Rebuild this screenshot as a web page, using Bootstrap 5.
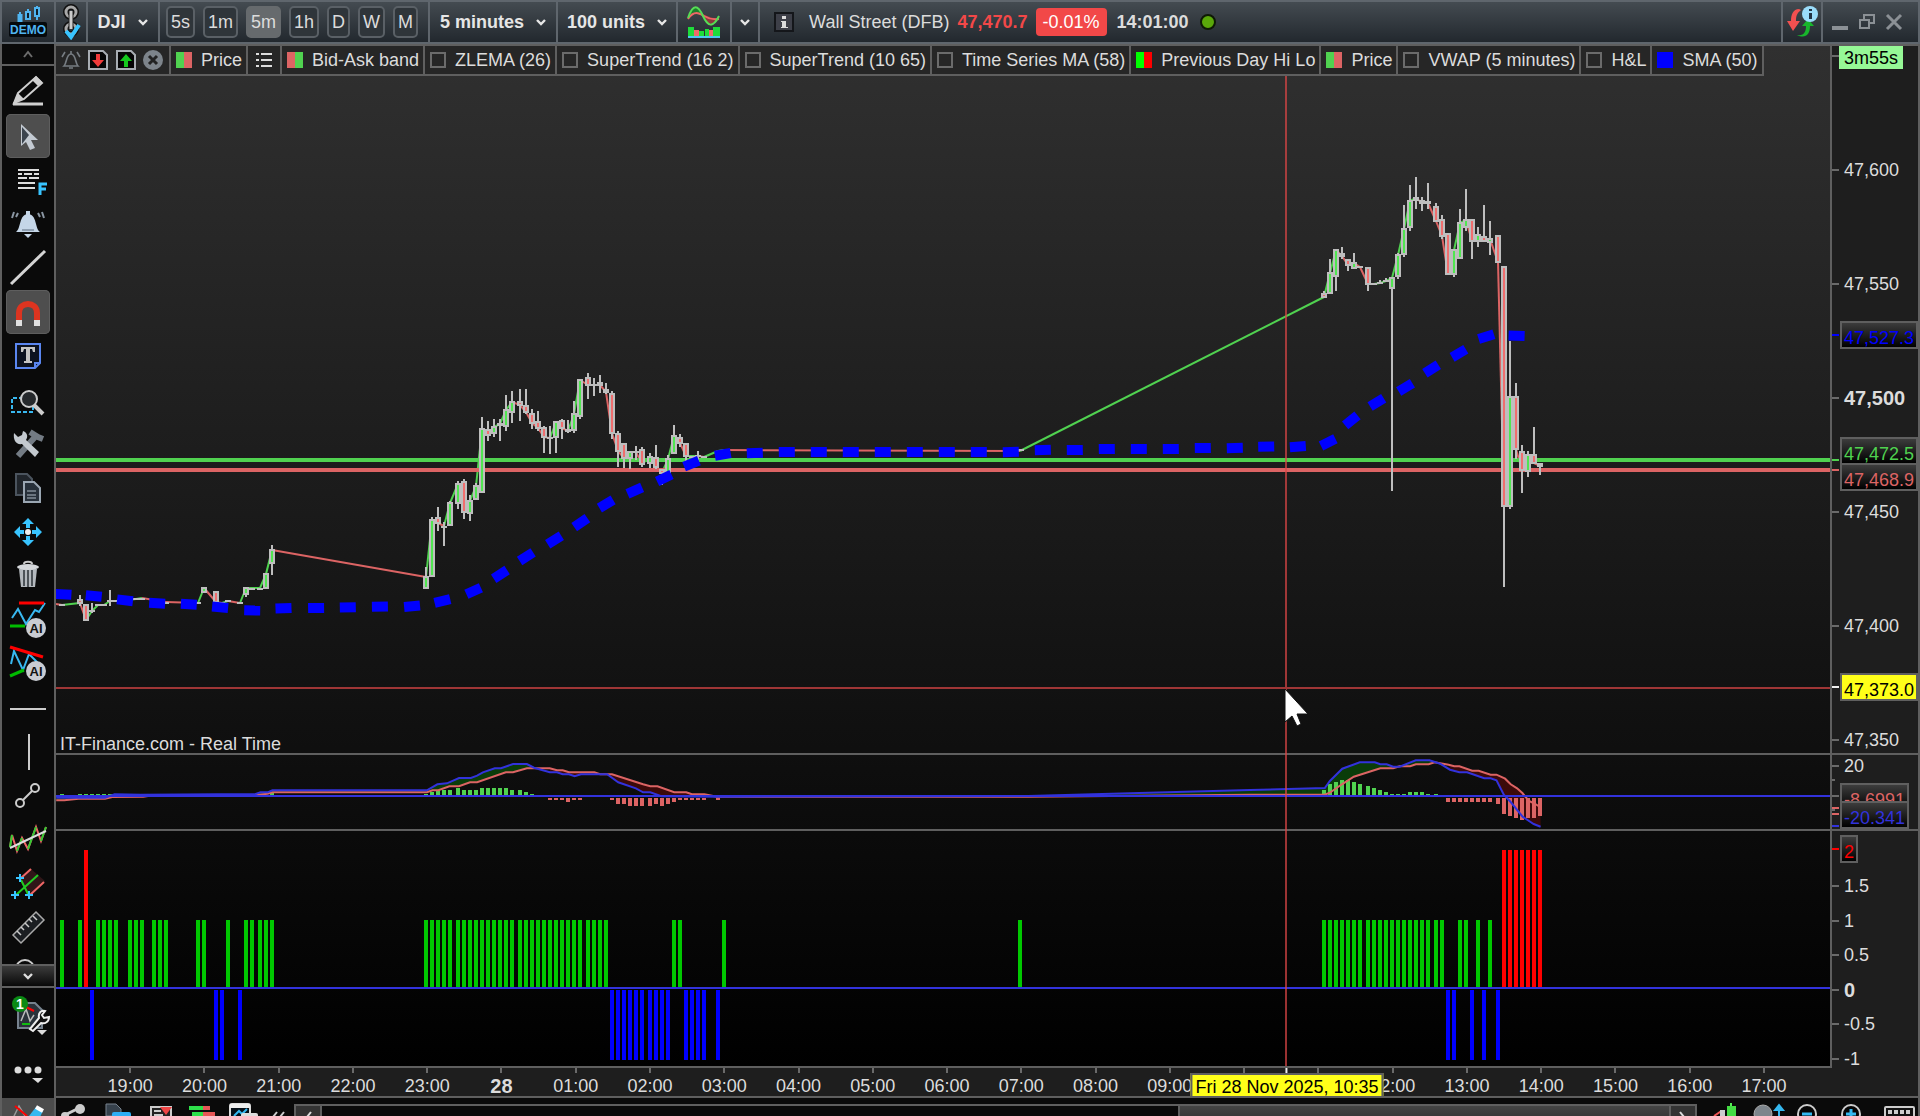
<!DOCTYPE html>
<html lang="en">
<head>
<meta charset="utf-8">
<meta name="viewport" content="width=device-width, initial-scale=1">
<title>DJI - 5 minutes</title>
<link href="https://cdn.jsdelivr.net/npm/bootstrap@5.3.0/dist/css/bootstrap.min.css" rel="stylesheet">
<style>
:root{--line:#5f5f5f;--steel:#5f666d;--txt:#dcdcdc}
body{font:18px/20px "Liberation Sans",Arial,sans-serif;color:var(--txt);background:#0a0a0a;overflow:hidden}
svg{display:block;flex:none}
button{color:inherit;font:inherit;background:none;border:0;padding:0}
.topbar{border:2px solid var(--steel);background:linear-gradient(#444b51,#22282e);height:44px}
.cell{border-right:2px solid var(--steel);display:flex;align-items:center;justify-content:center;flex:none}
.cell-logo,.cell-ind{width:54px}
.cell-link{width:32px}
.cell-market{width:72px}
.cell-frames{padding:0 10px 0 6px;gap:8px}
.cell-frame{padding:0 9px 0 10px}
.cell-units{padding:0 8px 0 9px}
.cell-more{width:28px}
.cell-sync{width:42px;border-left:2px solid var(--steel)}
.pick{appearance:none;border:0;color:#e6e6e6;font:bold 18px/20px "Liberation Sans",Arial,sans-serif;padding:0 22px 0 0;background:url("data:image/svg+xml,%3Csvg xmlns='http://www.w3.org/2000/svg' width='12' height='20'%3E%3Cpath d='M2 8l4 4 4-4' fill='none' stroke='%23e6e6e6' stroke-width='2.4'/%3E%3C/svg%3E") no-repeat right center;outline:0}
.pick option{color:#000}
.tf{border:2px solid #5a6066;border-radius:5px;height:32px;padding:0 3px;background:#2f353a}
.tf.active{background:#666a6d;border-color:#666a6d}
.quote{padding-left:14px;gap:8px}
.quote svg:first-child{margin-right:7px}
.last-price{color:#f24848}
.chg{background:#f24848;color:#fff;border-radius:4px;height:28px;padding:4px 7px}
.clock{padding:0 2px}
.winbtns{padding:0 15px 0 8px;gap:9px}
.winbtns button{width:18px}
.body-row{min-height:0;border:0 solid var(--line);border-width:0 2px}
.chart-col{min-width:0;border-top:2px solid var(--line)}
.side{width:54px;border-right:2px solid var(--line);background:#0a0a0a}
.tools{flex:1 1 0;min-height:0;overflow:hidden;padding-top:4px;border-top:2px solid var(--line)}
.tool{width:44px;height:44px;flex:none;border-radius:5px}
.tool.active{background:#4e4e4e;box-shadow:inset 0 0 0 1px #5e5e5e}
.fold{height:20px;flex:none;width:100%}
.fold.down{background:linear-gradient(#3c3c3c,#080808);border-top:2px solid var(--line);border-bottom:2px solid var(--line);height:24px}
.extra{height:110px;gap:17px;padding-top:1px;flex:none}
.stack{display:grid;grid-template-rows:minmax(0,709fr) minmax(0,76fr) minmax(0,237fr);flex:1 1 0;min-height:0;background:linear-gradient(#303030,#000)}
.pane{display:flex;min-height:0;border-bottom:2px solid var(--line)}
.pane-signal{border-bottom:0}
.pane-signal .plot{border-bottom:2px solid var(--line)}
.plot{flex:1 1 0;min-width:0;position:relative}
.plot svg,.cross svg{width:100%;height:100%}
.axis{width:88px;flex:none;border-left:2px solid var(--line);background:#1e1e1e;position:relative;display:flex;flex-direction:column;justify-content:space-between}
.axis-price{padding:115px 0 4px}
.axis-macd{padding-top:2px}
.axis-signal{padding-top:46px}
.axis .lv{display:flex;align-items:center;gap:5px;line-height:18px;height:18px}
.axis .lv::before{content:"";width:7px;height:2px;background:#6a6a6a}
.axis b,.hours b{font-size:20px}
.axis-ticks{position:absolute;left:0;top:0;width:7px;height:100%}
.vtag{position:absolute;left:8px;transform:translateY(-50%);height:28px;border:2px solid var(--line);background:linear-gradient(#3c3c3c,#000);padding:4px 2px 0;line-height:22px}
.vtag::before{content:"";position:absolute;left:-10px;top:11px;width:7px;height:2px;background:currentColor}
.axis-macd .vtag::before{display:none}
.v-sma{color:#00f}
.v-ask{color:#50d250}
.v-ask::before{top:20px}
.v-bid{color:#dc6464}
.v-bid::before{top:4px}
.v-cursor{color:#000;background:#ffff19}
.v-cursor::before{background:#eee}
.v-macd{color:#3232dc}
.v-signal{color:red}
.left-time{position:absolute;left:7px;top:0;background:#96f896;color:#000;padding:2px 5px;height:23px}
.left-time::before{content:"";position:absolute;left:-7px;top:9px;width:7px;height:2px;background:#6a6a6a}
.legend{position:absolute;left:0;top:0;height:30px;background:#262626;border-bottom:2px solid var(--line);z-index:3}
.lgi{display:flex;align-items:center;gap:9px;padding:0 4px 0 5px;border-right:2px solid var(--line);white-space:nowrap}
.lg-tools{gap:6px;padding-right:6px}
.lg-list{padding:0 8px 0 7px}
.lgi input{appearance:none;width:16px;height:16px;margin:0;border:2px solid #6b6b6b}
.lgi .gr{border:0;background:linear-gradient(90deg,#50d250 50%,#dc6464 50%)}
.lgi .rg{border:0;background:linear-gradient(90deg,#dc6464 50%,#50d250 50%)}
.lgi .pure{border:0;background:linear-gradient(90deg,#0f0 50%,red 50%)}
.lgi .blue{border:0;background:#00f}
.source{position:absolute;left:4px;bottom:0;line-height:18px}
.cross{position:absolute;inset:0 88px 0 0;z-index:2;pointer-events:none}
.times{height:30px;flex:none;background:#1e1e1e;border-bottom:2px solid var(--line);padding-right:88px;position:relative}
.hours{padding:0 29px 0 37px}
.hours>*{flex:1 1 0;min-width:0;display:flex;flex-direction:column;align-items:center;gap:4px;line-height:18px}
.hours>*::before{content:"";width:2px;height:5px;background:#6a6a6a}
.datetag{position:absolute;top:5px;left:1231px;transform:translateX(-50%);border:2px solid var(--line);border-bottom:0;background:#ffff19;color:#000;height:23px;padding:3px 3px 0;line-height:18px;white-space:nowrap;z-index:3}
.datetag::before{content:"";position:absolute;left:50%;top:-7px;width:2px;height:5px;margin-left:-2px;background:#eee}
.foot{height:18px;overflow:hidden;background:#0a0a0a;border:0 solid var(--line);border-width:0 2px}
.footcell{width:54px;background:#4c4c4c;border-right:2px solid var(--line)}
.sbar{margin-top:6px;height:24px;border:2px solid var(--line);border-bottom:0}
.sbar button{width:24px;background:#333}
.track{flex:858 1 0;border-left:2px solid var(--line)}
.thumb{background:linear-gradient(#444,#2a2a2a);border:2px solid var(--line);border-width:0 2px;flex:490 1 0}
</style>
<script src="https://cdn.jsdelivr.net/npm/bootstrap@5.3.0/dist/js/bootstrap.bundle.min.js"></script>
</head>
<body class="vh-100 d-flex flex-column">
<header class="topbar d-flex flex-shrink-0">
  <div class="cell cell-logo">
    <svg width="38" height="34" viewBox="0 0 38 34"><g stroke="#4fb4f0" stroke-width="2" fill="#4fb4f0"><path d="M11 7v8M19 4v10M28 1v14"/><rect x="9.500" y="10" width="3" height="7"/><rect x="17" y="7" width="4" height="7" fill="#10202c"/><rect x="26" y="3" width="4" height="8" fill="#10202c"/></g><rect x="0" y="17" width="38" height="15" rx="2" fill="#05090c"/><text x="19" y="29" text-anchor="middle" font-size="12" font-weight="bold" fill="#4fb4f0">DEMO</text></svg>
  </div>
  <div class="cell cell-link">
    <svg width="22" height="36" viewBox="0 0 22 36" fill="none"><g stroke="#111" stroke-width="6"><ellipse cx="11" cy="8" rx="5" ry="5"/><ellipse cx="11" cy="25" rx="5" ry="5"/></g><g stroke="#a9a9a9" stroke-width="3"><ellipse cx="11" cy="8" rx="5" ry="5"/><ellipse cx="11" cy="25" rx="5" ry="5"/></g><path d="M11 7v18" stroke="#222" stroke-width="5"/><path d="M11 7v18" stroke="#ccc" stroke-width="3"/><path d="M6 27l5 6 8-12" stroke="#38c4ff" stroke-width="4"/></svg>
  </div>
  <div class="cell cell-market"><select class="pick" aria-label="Market"><option>DJI</option></select></div>
  <div class="cell cell-frames">
    <button class="tf">5s</button><button class="tf">1m</button><button class="tf active">5m</button><button class="tf">1h</button><button class="tf">D</button><button class="tf">W</button><button class="tf">M</button>
  </div>
  <div class="cell cell-frame"><select class="pick" aria-label="Timeframe"><option>5 minutes</option></select></div>
  <div class="cell cell-units"><select class="pick" aria-label="Units"><option>100 units</option></select></div>
  <button class="cell cell-ind" aria-label="Indicators">
    <svg width="34" height="34" viewBox="0 0 34 34"><path d="M1 13C5 0 9-1 14 8l5 6C14 9 8 6 1 13z" fill="#1d7d2c"/><path d="M14 8c6 3 12 6 18 5-6 9-10 10-18-5z" fill="#8c3a3e"/><path d="M1 14C7 5 12 8 17 11s9 4 15 3" fill="none" stroke="#e66" stroke-width="2"/><path d="M1 13C6-2 11 0 16 11s10 12 16 0" fill="none" stroke="#5d5" stroke-width="2"/><path d="M1 32V22h6v10zM12 32v-6h5v6zM26 32V22h7v10zM18 32v-8h4v8z" fill="#1edc3a"/><path d="M7 32v-7h5v7zM22 32v-7h4v7z" fill="#f06a6a"/><path d="M1 32h32" stroke="#4cc8f0" stroke-width="2"/></svg>
  </button>
  <button class="cell cell-more" aria-label="More indicators"><svg width="12" height="10" viewBox="0 0 12 10"><path d="M2 3l4 4 4-4" fill="none" stroke="#e6e6e6" stroke-width="2.400"/></svg></button>
  <div class="quote d-flex align-items-center flex-fill">
    <svg width="20" height="20" viewBox="0 0 20 20"><rect x="1" y="1" width="18" height="18" fill="#3d3f48" stroke="#14161a" stroke-width="2"/><path d="M8 4h4v3H8zM7 9h5v6h2v1H7v-1h1v-5H7z" fill="#ddd"/></svg>
    <span>Wall Street (DFB)</span>
    <b class="last-price">47,470.7</b>
    <span class="chg">-0.01%</span>
    <b class="clock">14:01:00</b>
    <svg width="18" height="18" viewBox="0 0 18 18"><circle cx="9" cy="9" r="7" fill="#5aa80a" stroke="#0e1a05" stroke-width="2"/></svg>
  </div>
  <button class="cell cell-sync" aria-label="Synchronise">
    <svg width="34" height="34" viewBox="0 0 34 34"><path d="M14 4C8 4 6 10 6 16H2l6 10 7-10h-4c0-5 1-8 5-11z" fill="#f25050"/><path d="M12 30c7 1 9-3 9-9h-4l6-7 6 7h-4c0 9-5 13-13 9z" fill="#18b52c"/><circle cx="25" cy="9" r="8" fill="#9adcfa"/><path d="M24 4h3v2h-3zM24 8h3v6h-3z" fill="#234"/></svg>
  </button>
  <div class="winbtns d-flex align-items-center">
    <button aria-label="Minimise"><svg width="18" height="18" viewBox="0 0 18 18"><path d="M1 15h16" stroke="#8b9095" stroke-width="4"/></svg></button>
    <button aria-label="Restore"><svg width="18" height="18" viewBox="0 0 18 18"><path d="M6 6V2h10v8h-4M2 7h9v8H2z" fill="none" stroke="#8b9095" stroke-width="2"/></svg></button>
    <button aria-label="Close"><svg width="18" height="18" viewBox="0 0 18 18"><path d="M2 2l14 14M16 2L2 16" stroke="#8b9095" stroke-width="3"/></svg></button>
  </div>
</header>

<main class="body-row d-flex flex-fill">
<aside class="side d-flex flex-column align-items-center flex-shrink-0">
  <button class="fold" aria-label="Scroll up"><svg class="mx-auto" width="12" height="10" viewBox="0 0 12 10"><path d="M2 8l4-5 4 5" fill="none" stroke="#6c6c6c" stroke-width="2"/></svg></button>
  <nav class="tools d-flex flex-column align-items-center w-100" id="tools"></nav>
  <button class="fold down" aria-label="Scroll down"><svg class="mx-auto" width="14" height="10" viewBox="0 0 14 10"><path d="M3 3l4 4 4-4" fill="none" stroke="#ddd" stroke-width="2.400"/></svg></button>
  <div class="extra d-flex flex-column">
    <button aria-label="Chart settings"><svg width="44" height="48" viewBox="0 0 44 48"><path d="M12 14h17l7 7v18H12z" fill="#2a323a" stroke="#76828e" stroke-width="2"/><path d="M15 32l5-12 4 12 4-6" fill="none" stroke="#bbb" stroke-width="1.500"/><path d="M20 18l8 4" stroke="red" stroke-width="2"/><path d="M16 35h8" stroke="#1b1" stroke-width="2"/><path d="M24 40l9-11c-1-5 2-8 6-7l-3 4 2 3 5-1c0 5-4 7-8 6l-8 8z" fill="#111" stroke="#eee" stroke-width="2"/><path d="M31 41h10l-5 5z" fill="#ddd"/><circle cx="14" cy="15" r="8" fill="#0a8a14"/><text x="14" y="20" text-anchor="middle" font-size="14" font-weight="bold" fill="#fff">1</text></svg></button>
    <button aria-label="More"><svg width="44" height="44" viewBox="0 0 44 44" fill="#ddd"><circle cx="12" cy="16" r="3.500"/><circle cx="22" cy="16" r="3.500"/><circle cx="32" cy="16" r="3.500"/><path d="M26 24h11l-5 5z"/></svg></button>
  </div>
</aside>

<section class="chart-col d-flex flex-column flex-fill">
  <div class="stack position-relative">
    <div class="pane">
      <div class="plot">
        <svg id="price" viewBox="56 46 1774 707" preserveAspectRatio="none"></svg>
        <div class="source">IT-Finance.com - Real Time</div>
      </div>
      <div class="axis axis-price">
        <span class="lv">47,600</span><span class="lv">47,550</span><b class="lv">47,500</b><span class="lv">47,450</span><span class="lv">47,400</span><span class="lv">47,350</span>
        <span class="left-time">3m55s</span>
        <span class="vtag v-sma" style="top:40.9%">47,527.3</span>
        <span class="vtag v-ask" style="top:57.3%">47,472.5</span>
        <span class="vtag v-bid" style="top:61%">47,468.9</span>
        <span class="vtag v-cursor" style="top:90.7%">47,373.0</span>
      </div>
    </div>
    <div class="pane">
      <div class="plot"><svg id="macd" viewBox="56 755 1774 74" preserveAspectRatio="none"></svg></div>
      <div class="axis axis-macd">
        <span class="lv">20</span>
        <svg class="axis-ticks" viewBox="0 755 7 74" preserveAspectRatio="none" stroke-width="2"><path d="M0 780h3M0 796h7M0 810h3" stroke="#6a6a6a"/><path d="M0 808h7M0 814h7" stroke="#dc6464"/><path d="M0 826h7" stroke="#3232dc"/></svg>
        <span class="vtag v-bid" style="top:57%">-8.6991</span>
        <span class="vtag v-macd" style="top:81%">-20.341</span>
      </div>
    </div>
    <div class="pane pane-signal">
      <div class="plot"><svg id="signal" viewBox="56 831 1774 235" preserveAspectRatio="none"></svg></div>
      <div class="axis axis-signal">
        <span class="lv">1.5</span><span class="lv">1</span><span class="lv">0.5</span><b class="lv">0</b><span class="lv">-0.5</span><span class="lv">-1</span>
        <span class="vtag v-signal" style="top:7.6%">2</span>
      </div>
    </div>
    <div class="cross"><svg viewBox="56 46 1774 1022" preserveAspectRatio="none"><path d="M56 688H1830M1286 46V1066" stroke="#dc4646" stroke-opacity=".7" stroke-width="2"/><path d="M1285 689v33l7-6 5 10 4-2-4-10h11z" fill="#fff" stroke="#111"/></svg></div>
    <div class="legend d-flex">
      <div class="lgi lg-tools">
        <svg width="20" height="20" viewBox="0 0 20 20" fill="none" stroke="#777d83" stroke-width="1.600"><path d="M3 16c3-3 2-12 7-12s4 9 7 12zM8 18h4M10 4V1M4 2L1 7M16 2l3 5"/></svg>
        <svg width="22" height="22" viewBox="0 0 22 22"><path d="M2 2h14l4 4v14H2z" fill="#050505" stroke="#a8adb3" stroke-width="2"/><path d="M9 5h4v6h4l-6 7-6-7h4z" fill="#f03a3a"/></svg>
        <svg width="22" height="22" viewBox="0 0 22 22"><path d="M2 2h14l4 4v14H2z" fill="#050505" stroke="#a8adb3" stroke-width="2"/><path d="M9 18h4v-6h4l-6-7-6 7h4z" fill="#14c81e"/></svg>
        <svg width="20" height="20" viewBox="0 0 20 20"><circle cx="10" cy="10" r="10" fill="#7d848b"/><path d="M6 6l8 8M14 6l-8 8" stroke="#222" stroke-width="3"/></svg>
      </div>
      <label class="lgi"><input type="checkbox" class="gr" checked>Price</label>
      <button class="lgi lg-list" aria-label="List"><svg width="17" height="16" viewBox="0 0 17 16"><path d="M1 2h3M1 8h3M1 14h3M6 2h11M6 8h11M6 14h11" stroke="#ddd" stroke-width="2"/></svg></button>
      <label class="lgi"><input type="checkbox" class="rg" checked>Bid-Ask band</label>
      <label class="lgi"><input type="checkbox">ZLEMA (26)</label>
      <label class="lgi"><input type="checkbox">SuperTrend (16 2)</label>
      <label class="lgi"><input type="checkbox">SuperTrend (10 65)</label>
      <label class="lgi"><input type="checkbox">Time Series MA (58)</label>
      <label class="lgi"><input type="checkbox" class="pure" checked>Previous Day Hi Lo</label>
      <label class="lgi"><input type="checkbox" class="gr" checked>Price</label>
      <label class="lgi"><input type="checkbox">VWAP (5 minutes)</label>
      <label class="lgi"><input type="checkbox">H&amp;L</label>
      <label class="lgi"><input type="checkbox" class="blue" checked>SMA (50)</label>
    </div>
  </div>
  <div class="times">
    <div class="hours d-flex">
      <span>19:00</span><span>20:00</span><span>21:00</span><span>22:00</span><span>23:00</span><b>28</b><span>01:00</span><span>02:00</span><span>03:00</span><span>04:00</span><span>05:00</span><span>06:00</span><span>07:00</span><span>08:00</span><span>09:00</span><span></span><span></span><span>12:00</span><span>13:00</span><span>14:00</span><span>15:00</span><span>16:00</span><span>17:00</span>
    </div>
    <span class="datetag">Fri 28 Nov 2025, 10:35</span>
  </div>
</section>
</main>

<footer class="foot d-flex flex-shrink-0">
  <div class="footcell flex-shrink-0"><svg width="52" height="18" viewBox="0 0 52 18"><path d="M12 18l5-10 6 10" fill="none" stroke="#999" stroke-width="1.500"/><path d="M13 8l12 10" stroke="red" stroke-width="2"/><path d="M27 18l7-9 7 4-3 6z" fill="#35b8f0"/><path d="M34 9l7 4" stroke="#fff" stroke-width="4"/></svg></div>
  <svg width="238" height="18" viewBox="56 1098 238 18">
    <path d="M63 1116l14-7" stroke="#ccc" stroke-width="3"/><circle cx="80" cy="1109" r="5" fill="#ccc"/><circle cx="65" cy="1116" r="4" fill="#ccc"/>
    <path d="M106 1104h10l5 5v7h-15z" fill="#36414c" stroke="#76828e"/><rect x="112" y="1112" width="19" height="8" rx="2" fill="#2eaef5"/>
    <path d="M151 1107h20v10h-20z" fill="#222" stroke="#ccc" stroke-width="2"/><path d="M154 1111h7M154 1115h9" stroke="#ccc" stroke-width="2"/><path d="M160 1107h12l-6 8z" fill="#e44"/>
    <path d="M189 1106h14v4h-14zM192 1112h11v4h-11z" fill="#2ee04a"/><path d="M203 1106h7v4h-7zM203 1112h12v4h-12z" fill="#e65656"/>
    <rect x="230" y="1104" width="20" height="16" rx="2" fill="#061018" stroke="#ddd" stroke-width="2"/><path d="M230 1106h20" stroke="#eee" stroke-width="4"/><path d="M234 1116l5-5 3 3 5-5" fill="none" stroke="#35b8f0" stroke-width="2"/><rect x="241" y="1113" width="17" height="6" rx="2" fill="#ddd"/>
    <path d="M277 1112l-4 5M284 1112l-4 5" stroke="#ccc" stroke-width="2"/>
  </svg>
  <div class="sbar d-flex flex-fill">
    <button aria-label="Scroll left"><svg class="mx-auto" width="10" height="12" viewBox="0 0 10 12"><path d="M8 1L4 6l4 5" fill="none" stroke="#ddd" stroke-width="2"/></svg></button>
    <div class="track"></div><div class="thumb"></div>
    <button aria-label="Scroll right"><svg class="mx-auto" width="10" height="12" viewBox="0 0 10 12"><path d="M2 1l4 5-4 5" fill="none" stroke="#ddd" stroke-width="2"/></svg></button>
  </div>
  <svg width="221" height="18" viewBox="1697 1098 221 18">
    <path d="M1714 1116l6-4 4 3" stroke="#e55" stroke-width="2" fill="none"/><path d="M1720 1110h5v6h-5z" fill="#ccc"/><path d="M1731 1103v4" stroke="#5e5" stroke-width="2"/><rect x="1727" y="1106" width="9" height="10" fill="#4d4"/>
    <circle cx="1763" cy="1114" r="9" fill="#7d858c" stroke="#aaa"/><path d="M1779 1116v-8M1775 1110l4-5 4 5z" stroke="#35b8f0" stroke-width="2" fill="#35b8f0"/>
    <circle cx="1807" cy="1114" r="9" fill="#050505" stroke="#ccc" stroke-width="2"/><path d="M1802 1114h10" stroke="#35b8f0" stroke-width="3"/>
    <circle cx="1851" cy="1114" r="9" fill="#050505" stroke="#ccc" stroke-width="2"/><path d="M1846 1114h10M1851 1109v10" stroke="#35b8f0" stroke-width="3"/>
    <rect x="1885" y="1107" width="29" height="14" rx="1" fill="#111" stroke="#ccc" stroke-width="2"/><path d="M1888 1112h24" stroke="#ccc" stroke-width="4" stroke-dasharray="4 2"/>
  </svg>
</footer>

<script>
const tools = [
 ['Draw','<path d="M8 32l4-10 18-16 6 6-18 16z" fill="none" stroke="#d0d0d0" stroke-width="2"/><path d="M7 33l5-11 6 6zM26 9l4-4 6 6-4 4z" fill="#d0d0d0"/><path d="M7 33h30" stroke="#d0d0d0" stroke-width="3"/>'],
 ['Select','<path d="M15 9v22l5-4 4 8 5-2-4-8h7z" fill="#c3cad2"/><path d="M16 12v17l7-9z" fill="#3b444e"/>',1],
 ['Text format','<path d="M12 11h21M12 15h4m2 0h8m2 0h5M12 19h9m2 0h10M12 24h17M12 29h17" stroke="#ddd" stroke-width="2"/><path d="M34 36V25h7M34 30h6" stroke="#38c4ff" stroke-width="3" fill="none"/>'],
 ['Alert','<path d="M10 29c5-3 3-18 12-18s7 15 12 18z" fill="#c5d6e8"/><path d="M18 31h8l-4 4zM20 8h4v4h-4z" fill="#c5d6e8"/><path d="M16 27h12" stroke="#5a6a7c"/><path d="M8 9l-2 6M12 10l-2 4M32 10l2 4M36 9l2 6" stroke="#8a96a2" stroke-width="2"/>'],
 ['Line','<path d="M5 37L39 4" stroke="#d4d4d4" stroke-width="3"/>'],
 ['Magnet','<path d="M13 34V22c0-12 18-12 18 0v12" fill="none" stroke="#dc3420" stroke-width="6"/><path d="M10 29h6v6h-6zM28 29h6v6h-6z" fill="#e0e0e0"/>',1],
 ['Text','<path d="M10 9h24v19l-5 5H10z" fill="#0c1220" stroke="#5a86f0" stroke-width="2"/><path d="M34 28h-5v5" fill="none" stroke="#5a86f0" stroke-width="2"/><path d="M15 12h14v5h-2l-1-3h-2v12h2v2h-8v-2h2V14h-2l-1 3h-2z" fill="#c4c4c4"/>'],
 ['Zoom','<path d="M17 19H6v14h21v-5" fill="none" stroke="#38b8f0" stroke-width="2" stroke-dasharray="4 2"/><path d="M28 26l9 9" stroke="#ccc" stroke-width="4"/><circle cx="23" cy="20" r="8" fill="#26292c" stroke="#ccc" stroke-width="2"/>'],
 ['Settings','<path d="M12 33L29 14M24 9l8 5 5 2" stroke="#737b84" stroke-width="6"/><path d="M8 10l4 4 4-2 1-4c5 2 5 6 3 9l13 12-4 5-13-13c-6 1-9-4-8-11z" fill="#c3c9cf"/>'],
 ['Copy','<path d="M10 7h11l5 5v16H10z" fill="#20252b" stroke="#4b545e" stroke-width="2"/><path d="M18 15h10l6 6v14H18z" fill="#27303a" stroke="#9aa6b2" stroke-width="2"/><path d="M21 24h9M21 28h9M21 31h9" stroke="#aeb9c4"/>'],
 ['Move','<path d="M22 7l6 6h-4v4h-4v-4h-4zM22 35l6-6h-4v-4h-4v4h-4zM8 21l6-6v4h4v4h-4v4zM36 21l-6-6v4h-4v4h4v4z" fill="#38c4ff"/><circle cx="22" cy="21" r="3" fill="#eee"/>'],
 ['Delete','<path d="M13 14h18l-2 18H15z" fill="#b4b9be"/><path d="M18 15v16M22 15v17M26 15v16" stroke="#4d5358" stroke-width="2"/><ellipse cx="22" cy="12" rx="11" ry="3" fill="#d5d8db"/><path d="M18 9c0-3 8-3 8 0" fill="none" stroke="#ccc" stroke-width="2"/>'],
 ['AI lines','<g transform="translate(0 2)"><path d="M6 17l6-9 8 15 9-14 4 2 6-9" fill="none" stroke="#38b8f0" stroke-width="2"/><path d="M13 2h25" stroke="red" stroke-width="3"/><path d="M4 25h15" stroke="#0b0" stroke-width="3"/><circle cx="30" cy="27" r="10" fill="#c9ccd2"/><text x="30" y="32" text-anchor="middle" font-size="13" font-weight="bold" fill="#111">AI</text></g>'],
 ['AI patterns','<g transform="translate(0 2)"><path d="M5 19l3-13 9 19 6-16 10 10" fill="none" stroke="#38b8f0" stroke-width="2"/><path d="M4 2l33 10" stroke="red" stroke-width="3"/><path d="M4 31l14-6" stroke="#0b0" stroke-width="3"/><circle cx="30" cy="26" r="10" fill="#c9ccd2"/><text x="30" y="31" text-anchor="middle" font-size="13" font-weight="bold" fill="#111">AI</text></g>'],
 ['Horizontal line','<path d="M4 22h36" stroke="#ccc" stroke-width="2"/>'],
 ['Vertical line','<path d="M23 3v36" stroke="#ccc" stroke-width="2"/>'],
 ['Segment','<path d="M17 25l9-9" stroke="#ccc" stroke-width="2"/><g fill="none" stroke="#ccc" stroke-width="2"><circle cx="14" cy="28" r="4"/><circle cx="29" cy="13" r="4"/></g>'],
 ['Regression','<g transform="translate(0 -2)" fill="none" stroke-width="2"><path d="M4 30l2-12 5 16 5-13 6 11 8-22 5 14 5-14" stroke="#e66"/><path d="M4 30l2-12M11 34l5-13M22 32l8-22M35 24l5-14" stroke="#3c3"/><path d="M4 31l36-17" stroke="#ddd"/></g>'],
 ['Channel','<path d="M14 16L25 6l14 12-15 15z" fill="#301618"/><path d="M15 15L25 6M24 32l14-13" stroke="#e66" stroke-width="2"/><path d="M10 32l22-20M15 17l7 14" stroke="#2c2" stroke-width="2"/><path d="M10 15h8M14 11v8M5 32h8M9 28v8M19 32h8M23 28v8" stroke="#38c4ff" stroke-width="2"/>'],
 ['Ruler','<path d="M7 28L30 5l8 8-23 23z" fill="#1b1e22" stroke="#aaa" stroke-width="1.500"/><path d="M11 24l4 4M15 20l3 3M19 16l4 4M23 12l3 3M27 9l4 4" stroke="#ccc" stroke-width="1.500"/>'],
 ['Circle','<circle cx="19" cy="18" r="9" fill="none" stroke="#ccc" stroke-width="2"/>']
];
document.getElementById('tools').innerHTML = tools.map(([n,p,a]) =>
  `<button class="tool${a?' active':''}" aria-label="${n}"><svg width="44" height="42" viewBox="0 0 44 42">${p}</svg></button>`).join('');

// slot = number of five-minute bars since 19:00
const X = s => 130 + 2*Math.floor((s*6.1894+0.15)/2);
const G='#50d250', R='#dc6464', W='#bebebe';
const rect=(x,y,w,h,f)=>`<rect x="${x}" y="${y}" width="${w}" height="${h}" fill="${f}"/>`;

// slot, high, body top, body bottom, low, up/down
const left=[[-11,765,763,767,765,'r'],[-8,735,747,763,768,'r'],[-7,761,761,812,812,'r'],[-6,758,779,787,790,'g'],[-5,765,763,767,765,'g'],[-4,765,763,767,765,'g'],[-3,720,750,754,768,'g'],[-2,752,750,754,752,'g'],[1,747,745,750,747,'g'],[2,746,744,748,746,'r'],[6,758,756,760,758,'r'],[11,760,757,761,760,'r'],[12,712,712,728,728,'g'],[14,724,724,758,758,'r'],[15,757,755,759,757,'g'],[16,752,750,754,752,'g'],[18,759,757,761,759,'r'],[19,712,712,735,741,'g'],[20,716,714,718,716,'r'],[21,716,714,718,716,'r'],[22,670,670,716,716,'g'],[23,586,598,643,675,'g'],[48,652,678,716,716,'g'],[49,502,507,680,680,'g'],[50,471,502,523,543,'r'],[51,516,528,532,588,'r'],[52,453,455,529,529,'g'],[53,393,400,463,477,'g'],[54,387,393,488,506,'r'],[55,435,449,493,512,'g'],[56,399,405,451,451,'g'],[57,201,233,428,428,'g'],[58,213,237,259,273,'r'],[59,207,228,253,261,'g'],[60,207,220,228,273,'g'],[61,135,178,230,243,'g'],[62,123,154,188,219,'g'],[63,117,154,168,213,'r'],[64,117,166,188,192,'r'],[65,178,190,222,237,'r'],[66,183,213,238,243,'r'],[67,228,232,265,309,'r'],[68,228,262,268,312,'g'],[69,214,214,265,309,'g'],[70,207,209,238,267,'r'],[71,210,238,245,250,'r'],[72,153,190,242,249,'g'],[73,88,88,200,207,'g'],[74,69,82,108,147,'r'],[75,84,103,107,138,'g'],[76,75,95,108,128,'r'],[77,99,118,130,132,'r'],[78,123,130,253,267,'r'],[79,243,250,307,351,'r'],[80,280,280,326,355,'r'],[81,304,304,328,357,'g'],[82,288,304,308,330,'r'],[83,291,298,345,351,'r'],[84,309,318,343,355,'g'],[85,285,322,355,357,'r'],[86,357,357,372,405,'r'],[87,316,323,370,370,'g'],[88,225,256,313,313,'g'],[89,253,262,282,290,'r'],[90,280,280,320,332,'r'],[91,320,318,322,320,'r'],[92,303,316,322,330,'g'],[93,320,317,325,322,'g']].map(c=>[c[0],...c.slice(1,5).map(v=>350+v/3),c[5]]);
const right=[[193,424,430,445,445,'r'],[194,327,365,433,433,'g'],[195,298,298,380,423,'g'],[196,291,310,320,326,'r'],[197,328,328,349,362,'r'],[198,309,335,356,356,'g'],[199,350,348,353,350,'r'],[200,352,352,404,423,'r'],[201,400,400,404,400,'g'],[202,390,396,400,400,'g'],[203,384,389,393,393,'g'],[204,381,381,416,1022,'g'],[205,309,311,380,387,'g'],[206,165,233,314,320,'g'],[207,105,149,235,243,'g'],[208,81,142,152,177,'g'],[209,142,149,163,183,'r'],[210,98,153,163,177,'r'],[211,159,167,217,217,'r'],[212,195,208,260,267,'r'],[213,250,250,374,374,'r'],[214,298,298,374,380,'g'],[215,177,215,326,326,'g'],[216,117,208,235,243,'g'],[217,208,208,277,326,'r'],[218,231,251,276,290,'g'],[219,165,258,276,276,'r'],[220,213,263,280,315,'g'],[221,255,255,338,338,'r'],[222,347,347,1070,1310,'r'],[223,573,738,1070,1076,'g'],[224,699,738,901,927,'r'],[225,885,904,962,1029,'r'],[226,903,911,967,980,'g'],[227,831,911,943,943,'r'],[228,940,940,950,975,'r']].map(c=>[c[0],...c.slice(1,5).map(v=>150+v/3),c[5]]);
const candles=[...left,...right].map(c=>[X(c[0]),...c.slice(1,5).map(Math.round),c[5]]);
let pts=candles.map(c=>[c[0],c[5]=='g'?c[2]+1:c[3]-1]);
pts.unshift([56,604]);
pts.splice(left.length+1,0,[718,451],[724,450],[1020,451]);
let s='';
for(let i=1;i<pts.length;i++){const [a,b]=pts[i-1],[c,d]=pts[i];
  const flat=(a==724||a==56);
  s+=`<path d="M${a} ${b}L${c} ${d}" stroke="${flat||d>b?R:G}" stroke-width="2"/>`;}
s+=rect(1016,449,8,2,W);
s+=rect(56,458,1774,4,G)+rect(56,468,1774,4,R);
for(const [x,h,t,b,l,k] of candles){
  s+=rect(x-1,h,2,Math.max(l-h,0),W);
  if(b-t<3) s+=rect(x-3,t,6,2,W);
  else { s+=rect(x-3,t,6,b-t,W); if(b-t>4) s+=rect(x-1,t+2,2,b-t-4,k=='g'?'#50e650':'#f06e6e'); }
}
const sma=[[30,733],[98,738],[168,751],[240,760],[311,763],[381,772],[453,781],[523,775],[596,774],[667,772],[739,770],[811,769],[879,753],[949,723],[1009,673],[1067,620],[1130,570],[1189,518],[1246,462],[1310,422],[1376,384],[1437,341],[1507,313]].map(([x,y])=>[50+x/2.24,350+y/3]);
for(let i=1;i<17;i++) sma.push([722.8+32*i, i<2?453:i<10?452:i<12?450:i<15?449:448]);
[[38,890],[112,890],[183,877],[237,811],[297,757],[364,712],[425,657],[489,610],[553,560],[624,557]].forEach(([x,y])=>sma.push([1250+x/2.3403,150+y/3]));
sma.forEach(([x,y],i)=>{const p=sma[Math.max(i-1,0)],n=sma[Math.min(i+1,sma.length-1)];
  const flatEnd=i==sma.length-1; const a=flatEnd?0.03:Math.atan2(n[1]-p[1],n[0]-p[0]);
  const dx=8*Math.cos(a),dy=8*Math.sin(a);
  s+=`<path d="M${(x-dx).toFixed(1)} ${(y-dy).toFixed(1)}L${(x+dx).toFixed(1)} ${(y+dy).toFixed(1)}" stroke="#00f" stroke-width="10"/>`;});
document.getElementById('price').innerHTML=s;

const A=a=>a.map(([x,y])=>[50+x/2.0907,720+y/3]), B=a=>a.map(([x,y])=>[1250+x/2.3403,670+y/3]);
const blue=[...A([[13,233],[115,233],[135,223],[190,224],[430,222],[440,217],[455,217],[465,211],[788,211],[810,193],[830,190],[855,174],[880,174],[893,167],[905,157],[930,145],[943,145],[968,132],[997,132],[1012,143],[1045,157],[1060,157],[1072,163],[1085,163],[1097,169],[1110,163],[1165,163],[1188,187],[1225,205],[1240,217],[1255,217],[1278,229],[1400,230],[2045,228]]),...B([[0,360],[175,354],[187,333],[216,296],[257,277],[292,277],[305,283],[320,283],[335,290],[350,290],[388,271],[420,271],[445,281],[468,299],[490,307],[508,307],[548,325],[563,325],[577,331],[594,374],[610,396],[638,440],[664,462],[680,470]])];
const red=[...A([[13,241],[30,241],[60,236],[115,236],[130,231],[195,230],[215,226],[430,225],[455,221],[465,217],[788,217],[800,211],[812,211],[835,199],[855,199],[878,187],[893,187],[953,157],[968,157],[997,145],[1045,145],[1060,151],[1072,151],[1085,157],[1138,157],[1150,163],[1175,163],[1240,193],[1255,199],[1270,199],[1305,217],[1330,217],[1342,223],[1368,223],[1395,230],[2045,230]]),...B([[0,374],[175,374],[187,368],[215,343],[243,320],[305,295],[335,295],[350,289],[375,289],[388,283],[418,283],[432,277],[465,284],[478,289],[490,289],[520,302],[535,302],[563,314],[577,314],[597,326],[610,343],[625,355],[638,370],[652,392],[668,402],[680,412]])];
const P=a=>a.map(p=>p.map(v=>v.toFixed(1)).join(' ')).join('L');
// the fill between the two averages turns from green to red where they cross
const zone=(lo,hi,f)=>{const q=a=>a.filter(p=>p[0]>=lo&&p[0]<=hi);return `<path d="M${P(q(blue))}L${P(q(red).reverse())}Z" fill="${f}"/>`;};
let m=zone(50,536,'#0a3c0a')+zone(536,730,'#3c0a0a')+zone(1020,1441,'#0a3c0a')+zone(1441,1545,'#3c0a0a');
const up={48:1,49:3,50:5,51:5,52:5,53:7,54:5,55:5,56:5,57:7,58:7,59:7,60:7,61:7,62:5,63:5,64:3,65:1,23:2,193:5,194:11,195:13,196:15,197:15,198:13,199:11,200:9,201:7,202:5,203:3,204:1,205:1,206:1,207:3,208:3,209:3,210:1,211:1,'-11':1,'-8':1,'-7':1,'-6':1,'-5':1,'-4':1,'-3':1};
const dn={68:2,69:2,70:2,71:4,72:2,73:2,78:2,79:6,80:6,81:8,82:8,83:8,84:8,85:6,86:8,87:6,88:4,89:2,90:2,91:2,92:2,93:2,95:2,213:4,214:4,215:4,216:4,217:4,218:4,219:4,220:4,221:6,222:16,223:18,224:20,225:22,226:20,227:20,228:18};
for(const k in up) m+=rect(X(+k)-2,795-up[k],4,up[k],G);
for(const k in dn) m+=rect(X(+k)-2,798,4,dn[k],R);
m+=`<path d="M${P(red)}" fill="none" stroke="${R}" stroke-width="2"/><path d="M${P(blue)}" fill="none" stroke="#3232dc" stroke-width="2"/>`+rect(56,795,1774,2,'#3232dc');
document.getElementById('macd').innerHTML=m;

const span=(a,b)=>Array.from({length:b-a+1},(_,i)=>a+i);
let g='';
[-11,-8,-5,-4,-3,-2,0,1,2,4,5,6,11,12,16,...span(19,23),...span(48,77),88,89,96,144,...span(193,212),215,216,218,220].forEach(n=>g+=rect(X(n)-2,920,4,67,'#00c800'));
[-6,14,15,18,...span(78,87),...span(90,93),95,213,214,217,219,221].forEach(n=>g+=rect(X(n)-2,990,4,70,'#00f'));
[-7,...span(222,228)].forEach(n=>g+=rect(X(n)-2,850,4,137,'red'));
g+=rect(56,987,1774,2,'#3232dc');
document.getElementById('signal').innerHTML=g;
</script>
</body>
</html>
